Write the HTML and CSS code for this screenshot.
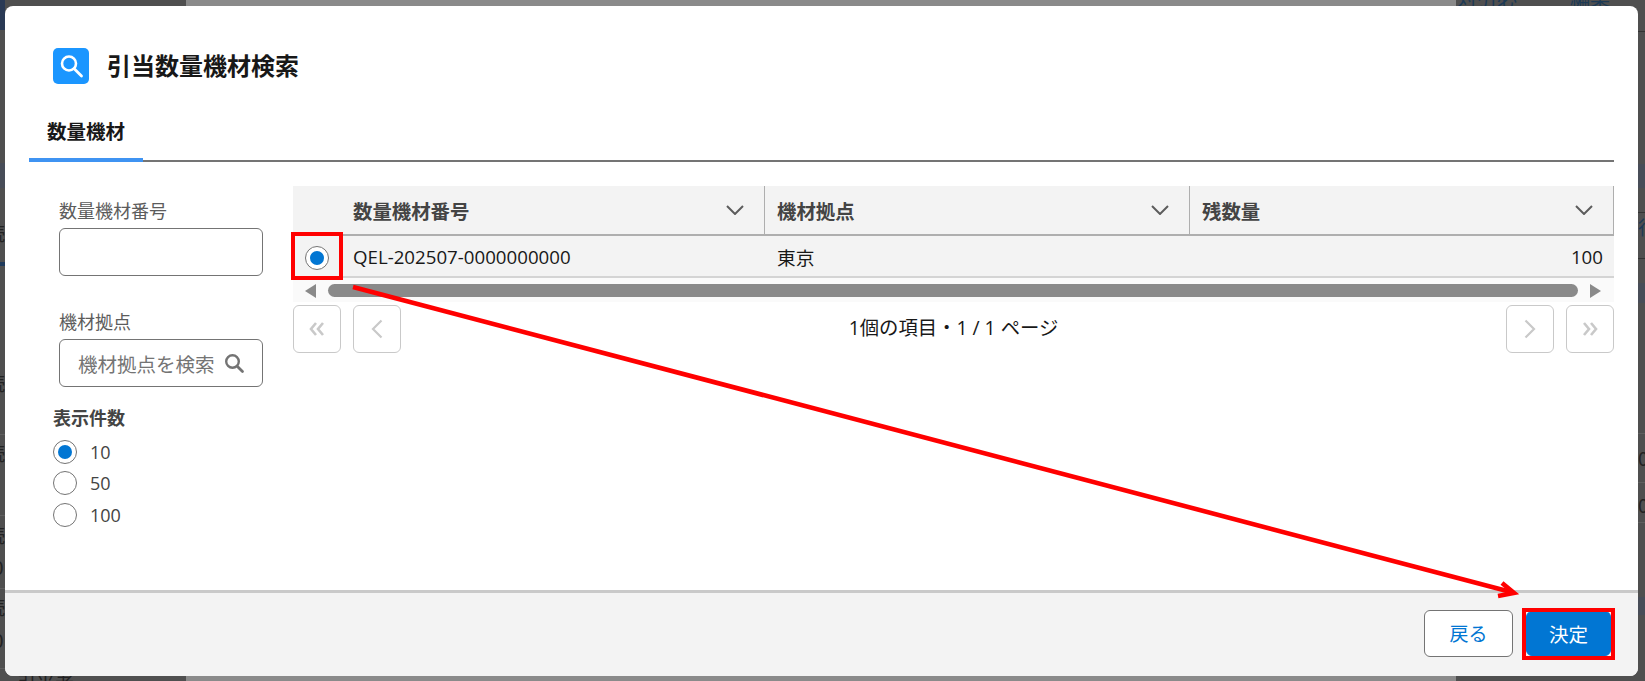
FILE: index.html
```html
<!DOCTYPE html>
<html lang="ja">
<head>
<meta charset="utf-8">
<title>引当数量機材検索</title>
<link rel="stylesheet" href="styles.css">
</head>
<body>
<div class="backdrop">
  <div class="bg-top-band"></div>
  <div class="bg-bottom-band"></div>
  <div class="bg-strip-left"></div>
  <div class="bg-strip-right"></div>
  <div class="bg-navy"></div>
  <div class="bg-top-text"><span>対引必</span><span>編集</span></div>
  <div class="bg-bottom-text">引当者</div>
  <span class="frag fl f1">続</span>
  <span class="frag fl f2">続</span>
  <span class="frag fl f3">続</span>
  <span class="frag fl f4">続</span>
  <span class="frag fl f5">続</span>
  <span class="frag fl f6">0</span>
  <span class="frag fl f7">0</span>
  <span class="frag fr f8">00</span>
  <span class="frag fr f9">00</span>
  <span class="frag fr frb f10">行</span>
  <main class="modal">
    <header class="modal-head">
      <span class="head-icon">
        <svg viewBox="0 0 36 36" width="36" height="36"><circle cx="16" cy="15.5" r="7" fill="none" stroke="#fff" stroke-width="2.6"/><path d="M21.2 20.8 L28.5 28" stroke="#fff" stroke-width="2.8" stroke-linecap="round"/></svg>
      </span>
      <h1 class="title">引当数量機材検索</h1>
    </header>
    <nav class="tabs"><div class="tab">数量機材</div></nav>
    <section class="body">
      <aside class="side">
        <div class="field">
          <label class="field-label">数量機材番号</label>
          <div class="input"></div>
        </div>
        <div class="field field-2">
          <label class="field-label">機材拠点</label>
          <div class="input input-search">
            <span class="placeholder">機材拠点を検索</span>
            <svg viewBox="0 0 22 22" width="22" height="22"><circle cx="9.5" cy="9.5" r="6.3" fill="none" stroke="#747474" stroke-width="2.4"/><path d="M14.2 14.2 L19.5 19.5" stroke="#747474" stroke-width="2.8" stroke-linecap="round"/></svg>
          </div>
        </div>
        <div class="count-title">表示件数</div>
        <div class="radio-row"><span class="radio radio-on"></span><span>10</span></div>
        <div class="radio-row"><span class="radio"></span><span>50</span></div>
        <div class="radio-row"><span class="radio"></span><span>100</span></div>
      </aside>
      <div class="results">
        <div class="grid">
          <div class="cell head-cell"></div>
          <div class="cell head-cell sep first"><span>数量機材番号</span><svg class="chev" viewBox="0 0 18 10" width="18" height="10"><path d="M1 1 L9 9 L17 1" fill="none" stroke="#5c5c5c" stroke-width="2"/></svg></div>
          <div class="cell head-cell sep"><span>機材拠点</span><svg class="chev" viewBox="0 0 18 10" width="18" height="10"><path d="M1 1 L9 9 L17 1" fill="none" stroke="#5c5c5c" stroke-width="2"/></svg></div>
          <div class="cell head-cell sep"><span>残数量</span><svg class="chev" viewBox="0 0 18 10" width="18" height="10"><path d="M1 1 L9 9 L17 1" fill="none" stroke="#5c5c5c" stroke-width="2"/></svg></div>
          <div class="cell row-cell sel-cell"><span class="radio radio-on"></span></div>
          <div class="cell row-cell first">QEL-202507-0000000000</div>
          <div class="cell row-cell">東京</div>
          <div class="cell row-cell num">100</div>
        </div>
        <div class="scroll">
          <span class="tri tri-l"></span>
          <span class="thumb"></span>
          <span class="tri tri-r"></span>
        </div>
        <div class="pager">
          <button class="pg"><svg viewBox="0 0 16 14" width="16" height="14"><path d="M7 1 L2 7 L7 13 M14 1 L9 7 L14 13" fill="none" stroke="#c9c9c9" stroke-width="2.6"/></svg></button>
          <button class="pg"><svg viewBox="0 0 12 20" width="12" height="20"><path d="M10.5 1.5 L2 10 L10.5 18.5" fill="none" stroke="#c9c9c9" stroke-width="2.2"/></svg></button>
          <div class="pg-info">1個の項目・1 / 1 ページ</div>
          <button class="pg"><svg viewBox="0 0 12 20" width="12" height="20"><path d="M1.5 1.5 L10 10 L1.5 18.5" fill="none" stroke="#c9c9c9" stroke-width="2.2"/></svg></button>
          <button class="pg"><svg viewBox="0 0 16 14" width="16" height="14"><path d="M2 1 L7 7 L2 13 M9 1 L14 7 L9 13" fill="none" stroke="#c9c9c9" stroke-width="2.6"/></svg></button>
        </div>
      </div>
    </section>
    <footer class="foot">
      <button class="btn btn-back">戻る</button>
      <button class="btn btn-ok">決定</button>
    </footer>
  </main>
  <svg class="marks" viewBox="0 0 1645 681" width="1645" height="681">
    <rect x="293" y="234" width="48" height="44" fill="none" stroke="#f00" stroke-width="4"/>
    <rect x="1524" y="610" width="89" height="48" fill="none" stroke="#f00" stroke-width="4"/>
    <path d="M353 287 L1511 592" stroke="#f00" stroke-width="4.6" fill="none"/>
    <path d="M1502 583 L1514 593 L1498 596" stroke="#f00" stroke-width="4.6" fill="none"/>
  </svg>
</div>
</body>
</html>
```
FILE: styles.css
```css
* { box-sizing: border-box; }
html, body { margin: 0; height: 100%; overflow: hidden; }
body { font-family: "Open Sans", "Noto Sans CJK JP", sans-serif; font-size: 18px; color: #181818; }

.backdrop {
  position: relative;
  width: 1645px;
  height: 681px;
  padding: 6px 7px 5px 5px;
  background: #4f4f4f;
  display: flex;
  overflow: hidden;
}
.bg-top-band { position: absolute; left: 186px; top: 0; width: 1270px; height: 6px; background: #8a8a8a; }
.bg-bottom-band { position: absolute; left: 186px; bottom: 0; width: 1270px; height: 5px; background: #8a8a8a; }
.bg-strip-left {
  position: absolute; left: 0; top: 0; width: 5px; height: 681px;
  background: linear-gradient(to bottom,
    transparent 163px, #484d58 163px, #484d58 188px, transparent 188px,
    transparent 262px, #1f3a5c 262px, #1f3a5c 266px, transparent 266px,
    transparent 434px, #5f5f5f 434px, #5f5f5f 435px, transparent 435px,
    transparent 515px, #5f5f5f 515px, #5f5f5f 516px, transparent 516px,
    transparent 588px, #5f5f5f 588px, #5f5f5f 589px, transparent 589px,
    transparent 668px, #5f5f5f 668px, #5f5f5f 669px, transparent 669px);
}
.bg-strip-right {
  position: absolute; right: 0; top: 0; width: 7px; height: 681px;
  background: linear-gradient(to bottom,
    transparent 31px, #333 31px, #333 32px, transparent 32px,
    transparent 164px, #484d58 164px, #484d58 188px, transparent 188px,
    transparent 212px, #333 212px, #333 213px, transparent 213px,
    transparent 258px, #333 258px, #333 259px, transparent 259px,
    transparent 283px, #484d58 283px, #484d58 303px, transparent 303px,
    transparent 433px, #5f5f5f 433px, #5f5f5f 434px, transparent 434px,
    transparent 482px, #5f5f5f 482px, #5f5f5f 483px, transparent 483px,
    transparent 522px, #5f5f5f 522px, #5f5f5f 523px, transparent 523px,
    transparent 597px, #484d58 597px, #484d58 615px, transparent 615px);
}
.bg-navy { position: absolute; left: 0; top: 0; width: 5px; height: 30px; background: #2a3a55; }
.bg-top-text { position: absolute; left: 1457px; top: -17px; display: flex; gap: 53px; color: #1d3a55; font-family: "Noto Sans CJK JP", sans-serif; font-size: 20px; }
.bg-bottom-text { position: absolute; left: 17px; top: 670px; color: #222; font-family: "Noto Sans CJK JP", sans-serif; font-size: 19px; line-height: 26px; }
.frag { position: absolute; font-family: "Noto Sans CJK JP", sans-serif; font-size: 19px; line-height: 26px; color: #222; }
.fl { left: -14px; }
.fr { left: 1638px; }
.frb { color: #1d3a55; }
.f1 { top: 220px; }
.f2 { top: 370px; }
.f3 { top: 440px; }
.f4 { top: 522px; }
.f5 { top: 594px; }
.f6 { top: 554px; left: -7px; }
.f7 { top: 627px; left: -7px; }
.f8 { top: 445px; }
.f9 { top: 492px; }
.f10 { top: 214px; }

.modal {
  position: relative;
  flex: 1;
  display: flex;
  flex-direction: column;
  background: #fff;
  border-radius: 8px;
  overflow: hidden;
}
.modal-head { display: flex; align-items: center; gap: 18px; padding: 42px 0 0 48px; }
.head-icon { width: 36px; height: 36px; background: #1b96ff; border-radius: 5px; display: flex; }
.title { margin: 0; font-size: 24px; font-weight: 700; line-height: 36px; color: #181818; }

.tabs { margin: 28px 24px 0; height: 50px; border-bottom: 2px solid #747474; display: flex; }
.tab {
  width: 114px;
  height: 50px;
  padding: 7px 0 0 18px;
  font-size: 19.5px;
  font-weight: 700;
  line-height: 26px;
  border-bottom: 4px solid #3f93f2;
}

.body { flex: 1; display: flex; margin: 24px 24px 0; min-height: 0; }
.side { width: 264px; flex: none; padding-top: 12px; }
.field { margin-left: 30px; width: 204px; }
.field-2 { margin-top: 33px; }
.field-label { display: block; height: 26px; line-height: 26px; margin-bottom: 4px; color: #5c5c5c; }
.input { height: 48px; border: 1px solid #747474; border-radius: 6px; background: #fff; }
.input-search { display: flex; align-items: center; justify-content: space-between; padding: 0 17px 0 18px; }
.placeholder { font-size: 19.5px; color: #747474; white-space: nowrap; }
.count-title { margin: 18px 0 5px 24px; height: 26px; line-height: 26px; font-weight: 700; color: #444; }
.radio-row { margin-left: 24px; height: 31.5px; display: flex; align-items: center; gap: 13px; color: #444; }
.radio { width: 24px; height: 24px; flex: none; border: 1px solid #747474; border-radius: 50%; background: #fff; display: flex; align-items: center; justify-content: center; }
.radio-on::after { content: ""; width: 14px; height: 14px; border-radius: 50%; background: #0176d3; }

.results { flex: 1; min-width: 0; }
.grid { display: grid; grid-template-columns: 50px 422px 425px 1fr; background: #f3f3f3; }
.cell { display: flex; align-items: center; padding: 0 11px 0 12px; }
.cell.first { padding-left: 10px; }
.head-cell {
  height: 50px;
  border-bottom: 2px solid #aeaeae;
  justify-content: space-between;
  font-size: 19.4px;
  font-weight: 700;
  color: #444;
}
.sep { border-right: 1px solid #aeaeae; padding-right: 20px; }
.chev { flex: none; }
.row-cell { height: 42px; padding-top: 1px; border-bottom: 2px solid #d4d4d4; font-size: 18.7px; color: #181818; }
.sel-cell { padding: 4px 0 0 12px; }
.num { justify-content: flex-end; }

.scroll { height: 24px; background: #fafafa; display: flex; align-items: flex-start; padding: 6px 0 0 12px; }
.thumb { flex: none; width: 1250px; height: 13px; margin: 0 12px; background: #8a8a8a; border-radius: 7px; }
.tri { flex: none; width: 0; height: 0; border-top: 7px solid transparent; border-bottom: 7px solid transparent; }
.tri-l { border-right: 11px solid #8a8a8a; }
.tri-r { border-left: 11px solid #8a8a8a; }

.pager { display: flex; align-items: center; gap: 12px; margin-top: 3px; }
.pg {
  width: 48px; height: 48px; padding: 0;
  display: flex; align-items: center; justify-content: center;
  background: #fff; border: 1px solid #c9c9c9; border-radius: 6px;
}
.pg-info { flex: 1; text-align: center; font-size: 19.35px; color: #181818; padding-bottom: 4px; }

.foot {
  height: 86px;
  flex: none;
  border-top: 3px solid #c9c9c9;
  background: #f3f3f3;
  display: flex;
  align-items: center;
  justify-content: flex-end;
  gap: 13px;
  padding: 0 27px 3px 0;
}
.btn { font: inherit; padding: 0; border-radius: 6px; }
.btn-back { width: 89px; height: 47px; background: #fff; border: 1px solid #747474; color: #0176d3; font-size: 19px; }
.btn-ok { width: 85px; height: 45px; background: #0176d3; border: 1px solid #0176d3; color: #fff; font-size: 19.5px; }

.marks { position: absolute; left: 0; top: 0; pointer-events: none; }
```
